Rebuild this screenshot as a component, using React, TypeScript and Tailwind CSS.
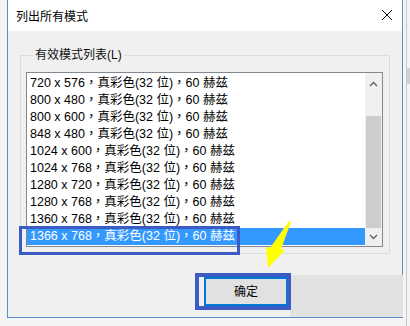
import React from 'react';

const modes = [
  '720 x 576',
  '800 x 480',
  '800 x 600',
  '848 x 480',
  '1024 x 600',
  '1024 x 768',
  '1280 x 720',
  '1280 x 768',
  '1360 x 768',
  '1366 x 768',
];

const uiFont = { fontFamily: '"Liberation Sans", "Noto Sans CJK SC", sans-serif' };
const rowFont = { fontFamily: '"Liberation Sans", "Noto Sans CJK TC", sans-serif' };

export default function App() {
  return (
    <div className="relative w-[410px] h-[326px] overflow-hidden bg-[#f4f4f4]" style={uiFont}>
      <div className="flex">
        {/* Dialog */}
        <div className="ml-[7px] w-[396px] h-[318px] flex flex-col border-x border-b border-[#5b8ccc] bg-[#f0f0f0]">
          {/* Title bar */}
          <div className="h-[31px] bg-white flex items-center justify-between pl-[8px] pr-[8px] shrink-0">
            <span className="text-[12px] text-black leading-none mt-[2px]">列出所有模式</span>
            <svg width="12" height="12" viewBox="0 0 12 12" className="mr-[1px] mb-[1px]">
              <path d="M1 1 L11 11 M11 1 L1 11" stroke="#111" strokeWidth="1" />
            </svg>
          </div>

          {/* Client area */}
          <div className="flex-1 pl-[12px]">
            <fieldset className="mt-[16px] w-[370px] h-[207px] border border-[#dcdcdc] pl-[5px] pr-[6px]">
              <legend className="ml-[7px] px-[2px] text-[12px] leading-[16px] text-[#111]">有效模式列表(L)</legend>

              {/* Listbox */}
              <div className="mt-[9px] w-[357px] h-[175px] border border-[#828790] bg-white flex pt-[2px] pb-[1px]">
                <div className="w-[338px] flex flex-col">
                  {modes.map((m, i) => {
                    const selected = i === modes.length - 1;
                    return (
                      <div
                        key={m}
                        lang="zh-Hant"
                        className={`h-[17px] pl-[3px] flex items-center whitespace-nowrap text-[12.5px] ${
                          selected ? 'bg-[#3399ff] text-white' : 'text-black'
                        }`}
                        style={rowFont}
                      >
                        {m}，真彩色(32 位)，60 赫兹
                      </div>
                    );
                  })}
                </div>

                {/* Scrollbar */}
                <div className="w-[17px] -mt-[2px] -mb-[1px] bg-[#f0f0f0] flex flex-col">
                  <div className="h-[17px] mt-[2px] flex items-center justify-center">
                    <svg width="9" height="6" viewBox="0 0 9 6">
                      <path d="M1 5 L4.5 1.5 L8 5" fill="none" stroke="#606060" strokeWidth="1.4" />
                    </svg>
                  </div>
                  <div className="mt-[24px] h-[112px] mx-[1px] bg-[#cdcdcd]" />
                  <div className="h-[17px] mt-auto mb-[1px] flex items-center justify-center">
                    <svg width="9" height="6" viewBox="0 0 9 6">
                      <path d="M1 1 L4.5 4.5 L8 1" fill="none" stroke="#606060" strokeWidth="1.4" />
                    </svg>
                  </div>
                </div>
              </div>
            </fieldset>

            {/* Buttons */}
            <div className="flex mt-[23px] pl-[184px]">
              <button className="w-[84px] h-[29px] bg-[#e1e1e1] border-2 border-[#0078d7] text-[12px] text-black flex items-center justify-center">
                确定
              </button>
            </div>
          </div>
        </div>

        {/* Right edge of the window behind */}
        <div className="ml-[3px] w-[1px] h-[326px] bg-[#c8c8c8]" />
        <div className="mt-[68px] w-[3px] h-[16px] bg-[#d0d0d0]" />
      </div>

      {/* Text of the window behind, cut off at the bottom */}
      <div className="h-[8px] overflow-hidden ml-[12px] border-l border-[#bdbdbd]">
        <div className="flex -mt-[3px] text-[12px] leading-[14px] text-[#222]">
          <span className="ml-[10px] w-[202px]">系统视频内存:</span>
          <span>0 MB</span>
        </div>
      </div>

      {/* Grey patch over the bottom-right of the dialog */}
      <div className="absolute left-[290px] top-[275px] w-[113px] h-[42px] bg-[#e2e2e2]" />

      {/* Annotation rectangles */}
      <div className="absolute left-[19px] top-[226px] w-[221px] h-[29px] border-[3px] border-[#3c5cc4]" />
      <div className="absolute left-[195px] top-[273px] w-[96px] h-[37px] border-[4px] border-[#3c5cc4]" />

      {/* Yellow arrow */}
      <svg className="absolute inset-0 pointer-events-none" width="410" height="326" viewBox="0 0 410 326">
        <polygon points="289,221 291,222 281,249 285,250 268,268 266,247 270,248" fill="#ffff00" />
      </svg>
    </div>
  );
}
